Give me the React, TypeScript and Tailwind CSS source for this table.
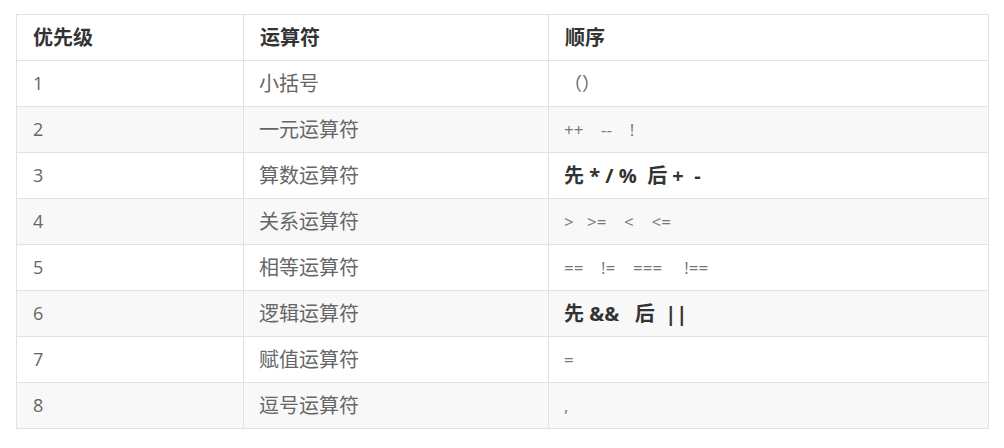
import React from "react";

const op = "text-[17px] whitespace-pre text-[#777]";
const bold = "text-[20px] font-bold text-[#333] whitespace-pre";

const rows: { p: string; name: string; op: React.ReactNode }[] = [
  { p: "1", name: "小括号", op: <span className="text-[18px] text-[#666]">（）</span> },
  { p: "2", name: "一元运算符", op: <span className={op}>{"++    --    !"}</span> },
  { p: "3", name: "算数运算符", op: <span className={bold}>{"先 * / %  后 +  -"}</span> },
  { p: "4", name: "关系运算符", op: <span className={op}>{">   >=    <    <="}</span> },
  { p: "5", name: "相等运算符", op: <span className={op}>{"==    !=    ===     !=="}</span> },
  { p: "6", name: "逻辑运算符", op: <span className={bold}>{"先 &&   后  ||"}</span> },
  { p: "7", name: "赋值运算符", op: <span className={op}>=</span> },
  { p: "8", name: "逗号运算符", op: <span className={op}>,</span> },
];

export default function App() {
  return (
    <div
      className="w-[1004px] h-[448px] bg-white pt-[14px] pl-[16px]"
      style={{ fontFamily: '"Open Sans", "Noto Sans CJK SC", sans-serif' }}
    >
      <table className="table-fixed border-collapse w-[972px] text-[#666]">
        <colgroup>
          <col className="w-[227px]" />
          <col className="w-[305px]" />
          <col className="w-[440px]" />
        </colgroup>
        <thead>
          <tr className="h-[46px] bg-white">
            {["优先级", "运算符", "顺序"].map((h) => (
              <th
                key={h}
                className="border border-[#e2e2e2] text-left font-bold text-[#333] text-[20px] pl-[16px] pr-[15px] py-0 align-middle"
              >
                {h}
              </th>
            ))}
          </tr>
        </thead>
        <tbody>
          {rows.map((r, i) => (
            <tr key={r.p} className={`h-[46px] ${i % 2 === 1 ? "bg-[#f8f8f8]" : "bg-white"}`}>
              <td className="border border-[#e2e2e2] pl-[16px] text-[18px] align-middle">{r.p}</td>
              <td className="border border-[#e2e2e2] pl-[15px] text-[20px] align-middle">{r.name}</td>
              <td className="border border-[#e2e2e2] pl-[15px] align-middle">{r.op}</td>
            </tr>
          ))}
        </tbody>
      </table>
    </div>
  );
}
